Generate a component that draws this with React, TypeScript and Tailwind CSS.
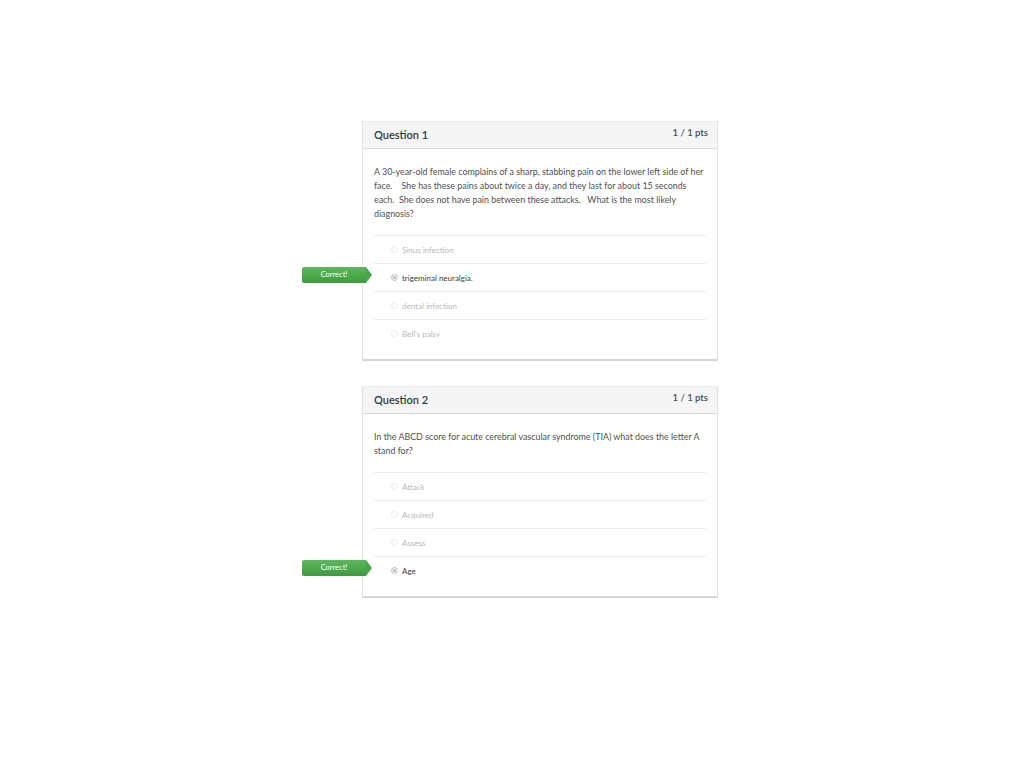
import React from 'react';

interface Question {
  title: string;
  points: string;
  text: string[];
  options: string[];
  answer: number;
}

const questions: Question[] = [
  {
    title: 'Question 1',
    points: '1 / 1 pts',
    text: [
      'A 30-year-old female complains of a sharp, stabbing pain on the lower left side of her',
      'face.\u00a0\u00a0\u00a0 She has these pains about twice a day, and they last for about 15 seconds',
      'each.\u00a0 She does not have pain between these attacks.\u00a0\u00a0 What is the most likely',
      'diagnosis?',
    ],
    options: ['Sinus infection', 'trigeminal neuralgia.', 'dental infection', "Bell's palsy"],
    answer: 1,
  },
  {
    title: 'Question 2',
    points: '1 / 1 pts',
    text: [
      'In the ABCD score for acute cerebral vascular syndrome (TIA) what does the letter A',
      'stand for?',
    ],
    options: ['Attack', 'Acquired', 'Assess', 'Age'],
    answer: 3,
  },
];

export default function App() {
  return (
    <div className="min-h-[768px] bg-white pt-[121px] pl-[362px] font-['Lato','Liberation_Sans',sans-serif]">
      <div className="flex w-[356px] flex-col gap-[25px]">
        {questions.map((q) => (
          <QuestionCard key={q.title} q={q} />
        ))}
      </div>
    </div>
  );
}

function QuestionCard({ q }: { q: Question }) {
  return (
    <div className="border-x border-t border-b-2 border-x-[#e2e2e2] border-t-[#ececec] border-b-[#d4d4d4] bg-white">
      {/* header */}
      <div className="flex h-[27px] items-start justify-between border-b border-[#d8d8d8] bg-[#f5f5f5] pr-[9px] pl-[11px]">
        <span className="mt-[5px] text-[11px] font-semibold text-[#2d3b45]">{q.title}</span>
        <span className="mt-[4px] text-[9.5px] font-semibold text-[#3d4b55]">{q.points}</span>
      </div>

      {/* body */}
      <div className="px-[11px] pt-[16px] pb-[12px]">
        <div className="text-[8.9px] leading-[14px] text-[#505050]">
          {q.text.map((line, i) => (
            <div key={i} className="whitespace-pre">{line}</div>
          ))}
        </div>

        <div className="mt-[14px]">
          {q.options.map((opt, i) => {
            const selected = i === q.answer;
            return (
              <div key={opt} className="relative flex h-[28px] items-center border-t border-[#ececec] pl-[17px]">
                {selected && <CorrectBadge />}
                <span
                  className={`flex h-[7px] w-[7px] items-center justify-center rounded-full border ${
                    selected ? 'border-[#c4c4c4] bg-[#f4f4f4]' : 'border-[#ececec]'
                  }`}
                >
                  {selected && <span className="h-[3px] w-[3px] rounded-full bg-[#bdbdbd]" />}
                </span>
                <span
                  className={`ml-[4px] text-[8px] ${selected ? 'text-[#3a3a3a]' : 'text-[#b9b9b9]'}`}
                >
                  {opt}
                </span>
              </div>
            );
          })}
        </div>
      </div>
    </div>
  );
}

function CorrectBadge() {
  return (
    <div className="absolute top-[3px] left-[-72px] flex h-[16px] items-center">
      <div className="flex h-[16px] w-[64px] items-center justify-center rounded-l-[2px] bg-gradient-to-b from-[#5cb85c] to-[#3e9a3e] text-[7.5px] text-white">
        Correct!
      </div>
      <div className="h-0 w-0 border-y-[8px] border-l-[6px] border-y-transparent border-l-[#4aa64a]" />
    </div>
  );
}
